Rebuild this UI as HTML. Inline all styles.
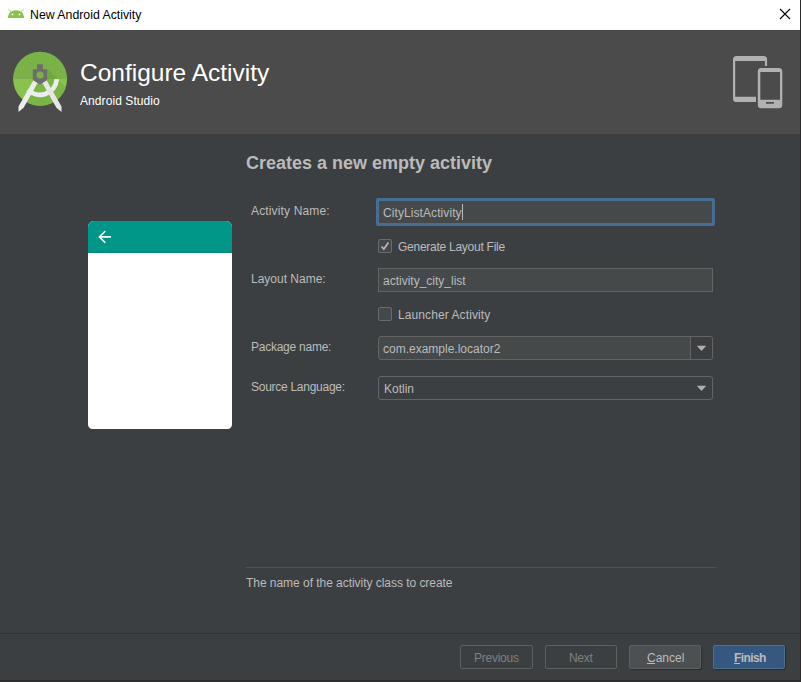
<!DOCTYPE html>
<html><head><meta charset="utf-8">
<style>
html,body{margin:0;padding:0;}
body{width:801px;height:682px;position:relative;overflow:hidden;background:#3C3F41;font-family:"Liberation Sans",sans-serif;}
.a{position:absolute;}
.t{position:absolute;white-space:nowrap;line-height:1;color:#BBBBBB;font-size:12px;}
#titlebar{left:0;top:0;width:800px;height:30px;background:#FFFFFF;}
#header{left:0;top:30px;width:800px;height:104px;background:#4B4B4B;}
#rborder{left:800px;top:0;width:1px;height:682px;background:#2B2B2B;}
#bborder{left:0;top:680px;width:801px;height:1px;background:#2B2B2B;}
#bborder2{left:0;top:681px;width:800px;height:1px;background:#2F3132;}
.field{position:absolute;box-sizing:border-box;border:1px solid #646464;background:#45494A;}
.btn{position:absolute;box-sizing:border-box;height:24px;top:645px;width:72px;border:1px solid #5E6060;border-radius:2px;}
.cb{position:absolute;box-sizing:border-box;width:14px;height:14px;border:1px solid #6B6B6B;border-radius:2px;background:#43494A;left:378px;}
</style></head><body>
<div id="titlebar" class="a"></div>
<!-- android head icon -->
<svg class="a" style="left:0;top:0" width="30" height="30" viewBox="0 0 30 30">
  <path d="M8 18 C8 13 11 10.2 16 10.2 C21 10.2 24 13 24 18 Z" fill="#8BC34A"/>
  <path d="M8.6 9.4 L11 11.6 M23.4 9.4 L21 11.6" stroke="#8BC34A" stroke-width="1" stroke-opacity="0.85" stroke-linecap="round"/>
  <circle cx="12.5" cy="14.5" r="0.9" fill="#fff"/>
  <circle cx="19.5" cy="14.5" r="0.9" fill="#fff"/>
</svg>
<div class="t" style="left:30px;top:9px;color:#000;font-size:12.3px">New Android Activity</div>
<svg class="a" style="left:779px;top:8px" width="12" height="12" viewBox="0 0 12 12">
  <path d="M1 1 L11 11 M11 1 L1 11" stroke="#000" stroke-width="1.1"/>
</svg>

<div id="header" class="a"></div>
<svg class="a" style="left:0;top:30px" width="80" height="104" viewBox="0 30 80 104">
  <defs>
    <clipPath id="cc"><circle cx="40.1" cy="78.8" r="27"/></clipPath>
    <linearGradient id="lg" x1="0" y1="0" x2="0" y2="1">
      <stop offset="0" stop-color="#7DB544"/><stop offset="1" stop-color="#74AB3F"/>
    </linearGradient>
  </defs>
  <g clip-path="url(#cc)">
    <rect x="10" y="50" width="60" height="29" fill="#79B347"/>
    <rect x="10" y="79" width="60" height="30" fill="#8AC24E"/>
    <path d="M42.9 64.3 L57.6 79 L47.2 79 L47.2 69.3 Z" fill="#70A740"/>
    <path d="M33.5 79 L57.6 79 L72 93.4 L72 120 L16 120 Z" fill="#7BB545"/>
  </g>
  <path d="M56.75 79.2 A16.8 16.8 0 0 1 28.1 89.9" fill="none" stroke="#EDEDED" stroke-width="4.8"/>
  <path d="M33.5 80 L37.6 83 L23.6 107.8 L18.5 112 L18.5 106.5 Z" fill="#EDEDED"/>
  <path d="M46.5 80 L42.4 83 L56.4 107.8 L61.5 112 L61.5 106.5 Z" fill="#E6E6E6"/>
  <path d="M37.1 64.3 H42.9 V69.3 H47.2 V80 L40 84.6 L32.8 80 V69.3 H37.1 Z" fill="#6D6D6D"/>
  <circle cx="40.1" cy="75" r="3.6" fill="#78B247"/>
</svg>
<div class="t" style="left:80px;top:61px;color:#FFFFFF;font-size:24.5px">Configure Activity</div>
<div class="t" style="left:80px;top:95px;color:#FFFFFF;font-size:12px;letter-spacing:0.08px">Android Studio</div>

<svg class="a" style="left:728px;top:50px" width="60" height="62" viewBox="728 50 60 62">
  <path fill="#B1B1B1" fill-rule="evenodd" d="M737 55.9 H763.5 A3.6 3.6 0 0 1 767.1 59.5 V65.9 H764.9 V61.1 H735.2 V96.8 H756 V102 H736.6 A3.6 3.6 0 0 1 733 98.4 V59.5 A3.6 3.6 0 0 1 736.6 55.9 Z"/>
  <path fill="#B1B1B1" fill-rule="evenodd" d="M761.3 67.9 H778.8 A3.5 3.5 0 0 1 782.3 71.4 V104.7 A3.5 3.5 0 0 1 778.8 108.2 H761.3 A3.5 3.5 0 0 1 757.8 104.7 V71.4 A3.5 3.5 0 0 1 761.3 67.9 Z M760.3 72 V99.8 H780 V72 Z M766 102 V103.8 H773.9 V102 Z"/>
</svg>
<div id="rborder" class="a"></div>
<div id="bborder" class="a"></div>
<div id="bborder2" class="a"></div>

<!-- heading -->
<div class="t" style="left:246px;top:154px;font-size:18px;font-weight:bold">Creates a new empty activity</div>

<!-- labels -->
<div class="t" style="left:251px;top:205px;letter-spacing:0.15px">Activity Name:</div>
<div class="t" style="left:251px;top:273px">Layout Name:</div>
<div class="t" style="left:251px;top:341px;letter-spacing:-0.25px">Package name:</div>
<div class="t" style="left:251px;top:381px;letter-spacing:-0.27px">Source Language:</div>

<!-- focused field -->
<div class="a" style="left:376px;top:198px;width:339px;height:28px;box-sizing:border-box;border:3px solid #466D94;border-radius:2px;background:#45494A"></div>
<div class="t" style="left:383px;top:207px;letter-spacing:0.08px">CityListActivity</div>
<div class="a" style="left:462px;top:204px;width:1px;height:16px;background:#BBBBBB"></div>

<div class="cb" style="top:239px"></div>
<svg class="a" style="left:378px;top:239px" width="14" height="14" viewBox="0 0 14 14">
  <path d="M3.5 7.5 L5.8 10 L10.5 3.5" fill="none" stroke="#B5B5B5" stroke-width="1.8"/>
</svg>
<div class="t" style="left:398px;top:241px;letter-spacing:-0.26px">Generate Layout File</div>

<div class="field" style="left:378px;top:268px;width:335px;height:24px"></div>
<div class="t" style="left:383px;top:275px">activity_city_list</div>

<div class="cb" style="top:307px"></div>
<div class="t" style="left:398px;top:309px;letter-spacing:0.09px">Launcher Activity</div>

<div class="field" style="left:378px;top:336px;width:335px;height:24px;border-radius:3px"></div>
<div class="a" style="left:690px;top:337px;width:21px;height:22px;background:#3C3F41;border-left:1px solid #646464;border-radius:0 2px 2px 0"></div>
<div class="t" style="left:383px;top:343px">com.example.locator2</div>
<svg class="a" style="left:696px;top:345px" width="12" height="8" viewBox="696 345 12 8"><path d="M696.8 345.8 L706.2 345.8 L701.5 351 Z" fill="#AEB0B2"/></svg>

<div class="field" style="left:378px;top:376px;width:335px;height:24px;border-radius:3px;background:#3C3F41"></div>
<div class="t" style="left:384px;top:383px">Kotlin</div>
<svg class="a" style="left:696px;top:385px" width="12" height="8" viewBox="696 385 12 8"><path d="M696.8 385.8 L706.2 385.8 L701.5 391 Z" fill="#AEB0B2"/></svg>

<!-- phone preview -->
<div class="a" style="left:88px;top:221px;width:144px;height:208px;background:#FFFFFF;border-radius:6px 6px 4.5px 4.5px;overflow:hidden">
  <div class="a" style="left:0;top:0;width:144px;height:32px;background:linear-gradient(to bottom,#009688 0,#009688 29px,#008C7F 32px)"></div>
  <svg class="a" style="left:0;top:0" width="40" height="32" viewBox="88 221 40 32">
    <path d="M111 236.9 H99.8 M105.3 231 L99.4 236.9 L105.3 242.8" fill="none" stroke="#FFFFFF" stroke-width="1.6"/>
  </svg>
</div>

<!-- bottom description -->
<div class="a" style="left:246px;top:567px;width:470px;height:1px;background:#515151"></div>
<div class="t" style="left:246px;top:577px;letter-spacing:-0.04px">The name of the activity class to create</div>

<div class="a" style="left:0;top:633px;width:800px;height:1px;background:#323232"></div>

<div class="btn" style="left:460px;width:73px"></div>
<div class="t" style="left:474px;top:652px;color:#7F7F7F;letter-spacing:-0.25px">Previous</div>
<div class="btn" style="left:545px"></div>
<div class="t" style="left:569px;top:652px;color:#7F7F7F;letter-spacing:-0.3px">Next</div>
<div class="btn" style="left:629px;background:#4C5052;box-shadow:1px 1px 1px rgba(0,0,0,0.3)"></div>
<div class="t" style="left:647px;top:652px">Cancel</div>
<div class="btn" style="left:713px;background:#365880;border-color:#4C708C;box-shadow:1px 1px 1px rgba(0,0,0,0.3)"></div>
<div class="t" style="left:734px;top:652px;font-weight:bold;letter-spacing:-0.6px">Finish</div>
<div class="a" style="left:647px;top:663px;width:8px;height:1px;background:#BBBBBB"></div>
<div class="a" style="left:734px;top:663px;width:6px;height:1px;background:#BBBBBB"></div>
</body></html>
